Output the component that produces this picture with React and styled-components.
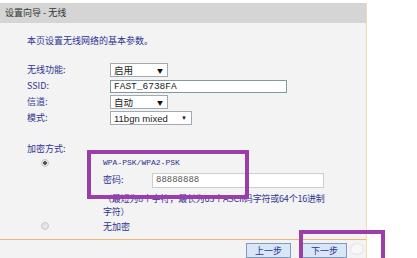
import styled, { createGlobalStyle } from "styled-components";

const GlobalStyle = createGlobalStyle`
  html, body {
    margin: 0;
    padding: 0;
    background: #ffffff;
  }
  body {
    font-family: "Noto Sans CJK SC", "Liberation Sans", sans-serif;
  }
`;

const Colors = {
  Navy: "#2f3394",
  Panel: "#f3f3f3",
  Header: "#d5d5d5",
  Purple: "#9c3ea9",
  Orange: "#f1b574",
};

const Screen = styled.div`
  position: relative;
  width: 417px;
  height: 258px;
  overflow: hidden;
  padding-top: 3px;
  box-sizing: border-box;
`;

const Panel = styled.div`
  width: 366px;
  border-right: 1px solid #f6d7b4;
  background: ${Colors.Panel};
  display: flex;
  flex-direction: column;
  height: 255px;
`;

const Header = styled.div`
  height: 20px;
  line-height: 20px;
  background: ${Colors.Header};
  padding-left: 5px;
  font-size: 9px;
  color: #333;
`;

const Body = styled.div`
  height: 221px;
  padding-left: 27px;
  box-sizing: border-box;
  border-bottom: 1px solid ${Colors.Orange};
`;

const Intro = styled.p`
  margin: 11px 0 0;
  line-height: 14px;
  font-size: 9px;
  color: ${Colors.Navy};
`;

const Form = styled.div`
  margin-top: 14px;
  display: grid;
  grid-template-columns: 83px 1fr;
  grid-auto-rows: 16px;
  align-items: center;
`;

const Label = styled.span`
  font-size: 9px;
  color: ${Colors.Navy};
  line-height: 14px;
`;

const Select = styled.div`
  width: ${(p) => p.width}px;
  height: 14px;
  box-sizing: border-box;
  border: 1px solid #a3a9b0;
  background: #fff;
  display: flex;
  align-items: center;
  justify-content: space-between;
  padding: 0 4px 0 3px;
  font-size: 9.5px;
  font-family: ${(p) => (p.latin ? '"Liberation Sans", sans-serif' : '"Noto Sans CJK SC", sans-serif')};
  color: #222;
`;

const Arrow = styled.span`
  font-size: 6px;
  color: #111;
`;

const TextInput = styled.div`
  width: ${(p) => p.width}px;
  height: ${(p) => p.height}px;
  box-sizing: border-box;
  border: ${(p) => p.border};
  background: #fff;
  display: flex;
  align-items: center;
  padding-left: 3px;
  font-family: "Liberation Mono", monospace;
  font-size: ${(p) => p.fontSize};
  color: ${(p) => p.color};
`;

const SectionTitle = styled(Label)`
  display: block;
  margin-top: 16px;
`;

const Encrypt = styled.div`
  display: grid;
  grid-template-columns: 76px 1fr;
  align-items: start;
`;

const Radio = styled.span`
  display: block;
  width: 8px;
  height: 8px;
  margin: ${(p) => p.top}px 0 0 14px;
  border-radius: 50%;
  box-sizing: border-box;
  border: 1px solid #c6c6c6;
  background: ${(p) => (p.checked ? "radial-gradient(circle, #555 0 1.6px, #e9e9e9 2px)" : "#e6e6e6")};
`;

const Option = styled.div`
  display: flex;
  flex-direction: column;
`;

const Mode = styled.span`
  font-family: "Liberation Mono", monospace;
  font-size: 8px;
  line-height: 14px;
  color: ${Colors.Navy};
`;

const PassRow = styled.div`
  display: flex;
  align-items: center;
  height: 16px;
  margin-top: 2px;
`;

const PassLabel = styled(Label)`
  width: 49px;
`;

const Hint = styled.p`
  margin: 4px 0 0;
  font-size: 9px;
  line-height: 13px;
  white-space: nowrap;
  letter-spacing: -0.2px;
  color: ${Colors.Navy};
`;

const NoneLabel = styled(Label)`
  display: block;
  margin-top: 2px;
`;

const Footer = styled.div`
  flex: 1;
  display: flex;
  justify-content: flex-end;
  align-items: flex-start;
  gap: 11px;
  padding: 3px 2px 0 0;
`;

const Button = styled.button`
  width: 45px;
  height: 15px;
  padding: 0;
  border: 1px solid #7d9cc4;
  background: #d8e6f6;
  color: ${Colors.Navy};
  font-family: "Noto Sans CJK SC", sans-serif;
  font-size: 9px;
  line-height: 13px;
`;

const Spinner = styled.span`
  width: 12px;
  height: 10px;
  margin-left: -8px;
  border-radius: 50%;
  border: 1px solid #e4e4e4;
  background: #f7f7f7;
`;

const Marker = styled.div`
  position: absolute;
  left: ${(p) => p.x}px;
  top: ${(p) => p.y}px;
  width: ${(p) => p.w}px;
  height: ${(p) => p.h}px;
  box-sizing: border-box;
  border: 4px solid ${Colors.Purple};
`;

export default function App() {
  return (
    <Screen>
      <GlobalStyle />
      <Panel>
        <Header>设置向导 - 无线</Header>
        <Body>
          <Intro>本页设置无线网络的基本参数。</Intro>
          <Form>
            <Label>无线功能:</Label>
            <Select width={58}>
              启用<Arrow>▼</Arrow>
            </Select>
            <Label>SSID:</Label>
            <TextInput width={177} height={13} border="1px solid #7f9a9a" fontSize="9.5px" color="#222">
              FAST_6738FA
            </TextInput>
            <Label>信道:</Label>
            <Select width={58}>
              自动<Arrow>▼</Arrow>
            </Select>
            <Label>模式:</Label>
            <Select width={82} latin>
              11bgn mixed<Arrow>▼</Arrow>
            </Select>
          </Form>
          <SectionTitle>加密方式:</SectionTitle>
          <Encrypt>
            <Radio checked top={3} />
            <Option>
              <Mode>WPA-PSK/WPA2-PSK</Mode>
              <PassRow>
                <PassLabel>密码:</PassLabel>
                <TextInput width={172} height={15} border="1px solid #cdcdcd" fontSize="9px" color="#555">
                  88888888
                </TextInput>
              </PassRow>
              <Hint>
                （最短为8个字符，最长为63个ASCII码字符或64个16进制
                <br />
                字符）
              </Hint>
            </Option>
            <Radio top={4} />
            <NoneLabel>无加密</NoneLabel>
          </Encrypt>
        </Body>
        <Footer>
          <Button>上一步</Button>
          <Button>下一步</Button>
          <Spinner />
        </Footer>
      </Panel>
      <Marker x={87} y={150} w={162} h={49} />
      <Marker x={299} y={230} w={86} h={40} />
    </Screen>
  );
}
